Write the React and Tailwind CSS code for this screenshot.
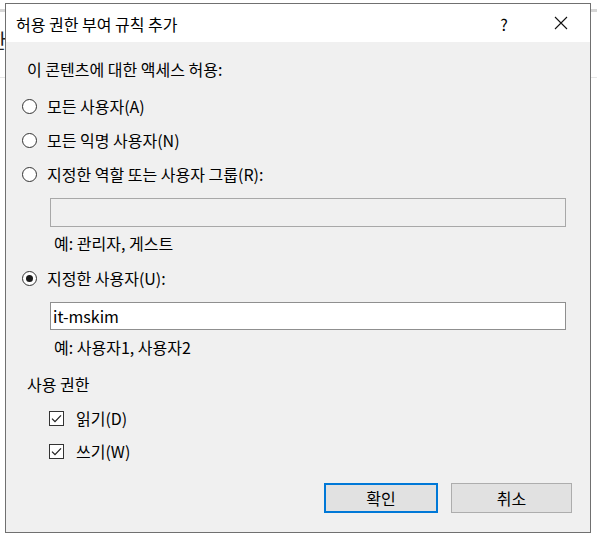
import React from "react";

const font = { fontFamily: '"Noto Sans CJK KR", "Noto Sans", sans-serif' };

function Radio({ checked }) {
  return (
    <span className="flex h-[15px] w-[15px] shrink-0 items-center justify-center rounded-full border border-[#333333] bg-white">
      {checked && <span className="h-[7px] w-[7px] rounded-full bg-[#1a1a1a]" />}
    </span>
  );
}

function Check() {
  return (
    <span className="flex h-[15px] w-[15px] shrink-0 items-center justify-center border border-[#333333] bg-white">
      <svg width="13" height="13" viewBox="0 0 13 13">
        <polyline points="2,6.6 5,9.6 11,3.4" fill="none" stroke="#222" strokeWidth="1.3" />
      </svg>
    </span>
  );
}

export default function App() {
  return (
    <div
      className="relative h-[537px] w-[597px] overflow-hidden bg-white pl-[5px] pt-[3px] text-[16px] leading-none text-black"
      style={font}
    >
      {/* desktop fragments behind the dialog */}
      <div className="absolute left-0 top-[9px] h-[3px] w-full bg-[#d6d6d6]" />
      <div className="absolute left-0 top-[77px] h-px w-full bg-[#e6e6e6]" />
      <div className="absolute left-[-12px] top-[31px] text-[20px] text-[#222]">한</div>

      <div className="relative flex h-[530px] w-[586px] flex-col border border-[#707070] bg-[#f0f0f0]">
        {/* title bar */}
        <div className="flex h-[38px] shrink-0 items-center bg-white">
          <span className="pl-[10px] pt-[1px]">허용 권한 부여 규칙 추가</span>
          <span className="ml-auto flex w-[46px] justify-center pt-[1px]">?</span>
          <span className="ml-[11px] mr-[6px] flex w-[46px] justify-center">
            <svg width="14" height="14" viewBox="0 0 14 14">
              <path d="M1 1 L13 13 M13 1 L1 13" stroke="#111" strokeWidth="1.1" fill="none" />
            </svg>
          </span>
        </div>

        {/* content */}
        <div className="flex flex-col">
          <div className="mt-[17px] flex h-[20px] items-center pl-[21px]">이 콘텐츠에 대한 액세스 허용:</div>

          <div className="mt-[17px] flex h-[20px] items-center gap-[10px] pl-[16px]">
            <Radio />
            <span>모든 사용자(A)</span>
          </div>
          <div className="mt-[14px] flex h-[20px] items-center gap-[10px] pl-[16px]">
            <Radio />
            <span>모든 익명 사용자(N)</span>
          </div>
          <div className="mt-[14px] flex h-[20px] items-center gap-[10px] pl-[16px]">
            <Radio />
            <span>지정한 역할 또는 사용자 그룹(R):</span>
          </div>

          <div className="ml-[44px] mt-[14px] h-[29px] w-[516px] border border-[#a8a8a8] bg-[#f0f0f0]" />
          <div className="mt-[6px] flex h-[20px] items-center pl-[48px]">예: 관리자, 게스트</div>

          <div className="mt-[15px] flex h-[20px] items-center gap-[10px] pl-[16px]">
            <Radio checked />
            <span>지정한 사용자(U):</span>
          </div>

          <div className="ml-[44px] mt-[14px] flex h-[28px] w-[516px] items-center border border-[#8f8f8f] bg-white pl-[2px]">
            it-mskim
          </div>
          <div className="mt-[7px] flex h-[20px] items-center pl-[48px]">예: 사용자1, 사용자2</div>

          <div className="mt-[17px] flex h-[20px] items-center pl-[21px]">사용 권한</div>

          <div className="mt-[14px] flex h-[20px] items-center gap-[12px] pl-[43px]">
            <Check />
            <span>읽기(D)</span>
          </div>
          <div className="mt-[13px] flex h-[20px] items-center gap-[12px] pl-[43px]">
            <Check />
            <span>쓰기(W)</span>
          </div>

          <div className="mt-[22px] flex justify-end gap-[13px] pr-[18px]">
            <button className="flex h-[30px] w-[114px] items-center justify-center border-2 border-[#0078d7] bg-[#e1e1e1]">
              확인
            </button>
            <button className="flex h-[30px] w-[121px] items-center justify-center border border-[#adadad] bg-[#e1e1e1]">
              취소
            </button>
          </div>
        </div>
      </div>
    </div>
  );
}
